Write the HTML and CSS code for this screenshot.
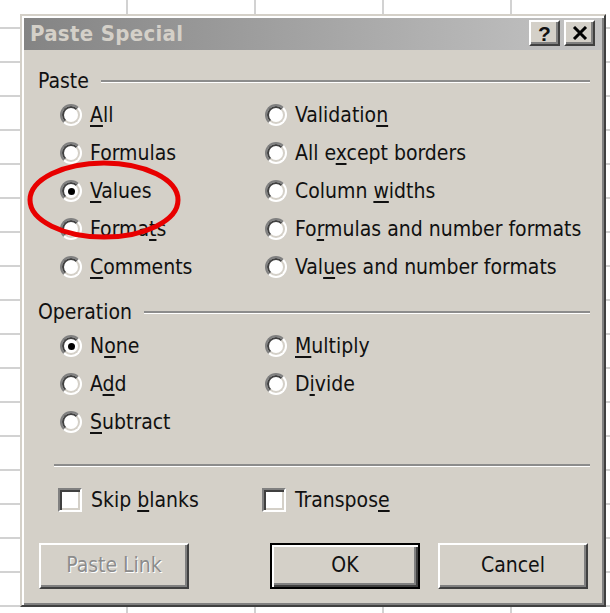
FILE: index.html
```html
<!DOCTYPE html>
<html lang="en">
<head>
<meta charset="utf-8">
<title>Paste Special</title>
<link rel="stylesheet" href="styles.css">
</head>
<body>
<div class="window">
  <div class="titlebar">
    <span class="title">Paste Special</span>
    <div class="caption-btns">
      <span class="cap-btn help">?</span>
      <span class="cap-btn close">
        <svg width="16" height="14" viewBox="0 0 16 14"><path d="M2 1 L14 13 M14 1 L2 13" stroke="#000" stroke-width="3" fill="none"/></svg>
      </span>
    </div>
  </div>

  <div class="content">
    <div class="group-head"><span>Paste</span><span class="rule"></span></div>
    <div class="opts">
      <div class="opt"><span class="radio"></span><span><u>A</u>ll</span></div>
      <div class="opt"><span class="radio"></span><span>Validatio<u>n</u></span></div>
      <div class="opt"><span class="radio"></span><span><u>F</u>ormulas</span></div>
      <div class="opt"><span class="radio"></span><span>All e<u>x</u>cept borders</span></div>
      <div class="opt"><span class="radio checked"></span><span><u>V</u>alues</span></div>
      <div class="opt"><span class="radio"></span><span>Column <u>w</u>idths</span></div>
      <div class="opt"><span class="radio"></span><span>Forma<u>t</u>s</span></div>
      <div class="opt"><span class="radio"></span><span>Fo<u>r</u>mulas and number formats</span></div>
      <div class="opt"><span class="radio"></span><span><u>C</u>omments</span></div>
      <div class="opt"><span class="radio"></span><span>Val<u>u</u>es and number formats</span></div>
    </div>

    <div class="group-head op-head"><span>Operation</span><span class="rule"></span></div>
    <div class="opts">
      <div class="opt"><span class="radio checked"></span><span>N<u>o</u>ne</span></div>
      <div class="opt"><span class="radio"></span><span><u>M</u>ultiply</span></div>
      <div class="opt"><span class="radio"></span><span>A<u>d</u>d</span></div>
      <div class="opt"><span class="radio"></span><span>D<u>i</u>vide</span></div>
      <div class="opt"><span class="radio"></span><span><u>S</u>ubtract</span></div>
    </div>

    <div class="separator"></div>

    <div class="checks">
      <div class="opt"><span class="check"></span><span>Skip <u>b</u>lanks</span></div>
      <div class="opt"><span class="check"></span><span>Transpos<u>e</u></span></div>
    </div>

    <div class="buttons">
      <span class="btn disabled">Paste Link</span>
      <span class="btn default ok">OK</span>
      <span class="btn cancel">Cancel</span>
    </div>
  </div>

  <svg class="mark" width="160" height="84" viewBox="0 0 160 84">
    <ellipse cx="80" cy="42" rx="74" ry="37" fill="none" stroke="#e80000" stroke-width="5"/>
  </svg>
</div>
</body>
</html>
```

FILE: styles.css
```css
* { box-sizing: border-box; }

html, body { height: 100%; }

body {
  margin: 0;
  padding: 14px 0 0 20px;
  background-color: #fff;
  background-image:
    linear-gradient(to right, #d2d2d2 2px, transparent 2px),
    linear-gradient(to bottom, #d2d2d2 2px, transparent 2px);
  background-size: 128px 100%, 100% 34px;
  background-position: 126px 0, 0 27px;
  font-family: "DejaVu Sans Condensed", "DejaVu Sans", sans-serif;
  font-size: 21px;
  color: #111;
  overflow: hidden;
}

/* window frame: classic 3D bevel */
.window {
  position: relative;
  width: 586px;
  height: 593px;
  background: #d4d0c8;
  border: 2px solid;
  border-color: #d4d0c8 #404040 #404040 #d4d0c8;
  box-shadow: inset 2px 2px 0 #fff, inset -2px -2px 0 #808080;
  padding: 2px;
}

.titlebar {
  height: 32px;
  display: flex;
  align-items: center;
  justify-content: space-between;
  padding: 0 7px 2px 6px;
  background: linear-gradient(to right, #848484, #c4c4c4);
}

.title {
  font-weight: bold;
  color: #d4d0c8;
  font-size: 22px;
  letter-spacing: 0.3px;
}

.caption-btns { display: flex; gap: 4px; }

.cap-btn {
  width: 31px;
  height: 26px;
  display: flex;
  align-items: center;
  justify-content: center;
  background: #d4d0c8;
  border: 2px solid;
  border-color: #fff #404040 #404040 #fff;
  box-shadow: inset -2px -2px 0 #808080;
  font-weight: bold;
  font-size: 21px;
  line-height: 1;
  font-family: "Liberation Sans", sans-serif;
}

.content { padding: 16px 12px 0 14px; }

.group-head {
  height: 30px;
  display: flex;
  align-items: center;
  gap: 12px;
}

.rule {
  flex: 1;
  height: 3px;
  border-top: 2px solid #8c8c8c;
  border-bottom: 1px solid #fff;
}

.op-head { margin-top: 11px; }

.opts {
  display: grid;
  grid-template-columns: 205px 1fr;
  margin-left: 22px;
}

.opt {
  height: 38px;
  display: flex;
  align-items: center;
  gap: 8px;
  white-space: nowrap;
}

u { text-decoration-thickness: 1.5px; text-underline-offset: 3px; }

/* sunken round option button */
.radio {
  position: relative;
  flex: none;
  width: 22px;
  height: 22px;
  border-radius: 50%;
  border: 2px solid;
  border-color: #808080 #fff #fff #808080;
  background: #fff;
}
.radio::before {
  content: "";
  position: absolute;
  inset: 0;
  border-radius: 50%;
  border: 2px solid;
  border-color: #404040 #d4d0c8 #d4d0c8 #404040;
}
.radio.checked::after {
  content: "";
  position: absolute;
  left: 50%;
  top: 50%;
  width: 7px;
  height: 7px;
  margin: -3.5px 0 0 -3.5px;
  border-radius: 50%;
  background: #000;
}

.separator {
  margin: 23px 0 0 16px;
  height: 3px;
  border-top: 2px solid #8c8c8c;
  border-bottom: 1px solid #fff;
}

.checks {
  display: grid;
  grid-template-columns: 204px 1fr;
  margin: 14px 0 0 20px;
}
.checks .opt { gap: 9px; }

.check {
  position: relative;
  flex: none;
  width: 24px;
  height: 24px;
  border: 2px solid;
  border-color: #808080 #fff #fff #808080;
  background: #fff;
  box-shadow: inset 2px 2px 0 #404040, inset -2px -2px 0 #d4d0c8;
}

.buttons {
  display: flex;
  margin: 24px 0 0 1px;
}

.btn {
  width: 150px;
  height: 46px;
  display: flex;
  align-items: center;
  justify-content: center;
  padding-bottom: 2px;
  background: #d4d0c8;
  border: 2px solid;
  border-color: #fff #404040 #404040 #fff;
  box-shadow: inset -2px -2px 0 #808080;
}
.btn.disabled { color: #8c8c8c; text-shadow: 1px 1px 0 #fff; }
.btn.default {
  border-color: #000;
  box-shadow: inset 2px 2px 0 #fff, inset -2px -2px 0 #404040, inset -4px -4px 0 #808080;
}
.btn.ok { margin-left: 81px; }
.btn.cancel { margin-left: 18px; }

/* red highlight ring drawn over the dialog */
.mark {
  position: absolute;
  left: 2px;
  top: 142px;
}
```
